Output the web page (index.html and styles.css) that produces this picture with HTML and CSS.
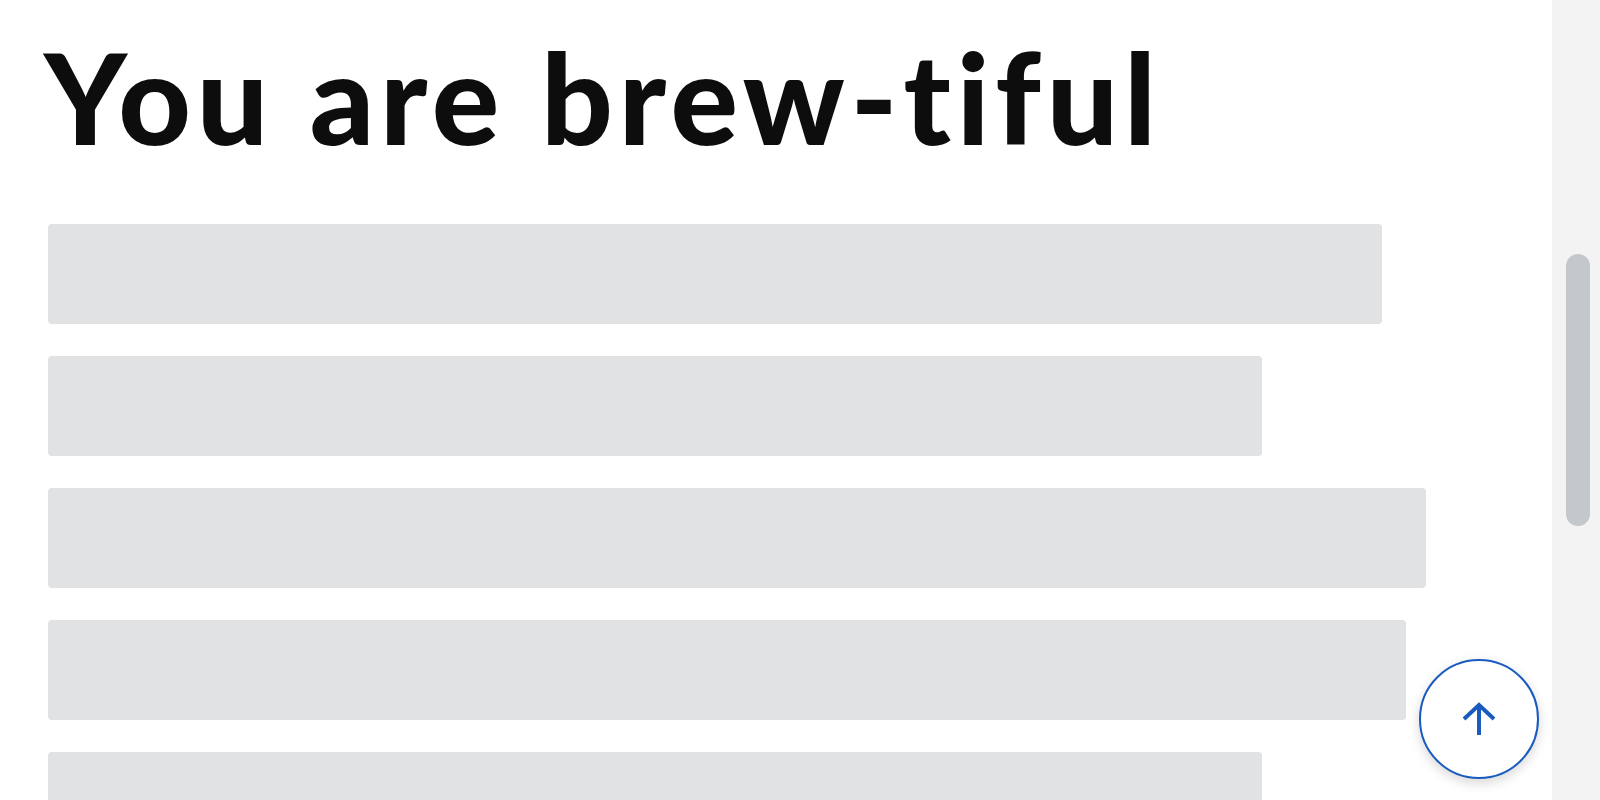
FILE: index.html
```html
<!DOCTYPE html>
<html lang="en">
<head>
<meta charset="utf-8">
<title>You are brew-tiful</title>
<link rel="stylesheet" href="styles.css">
</head>
<body>
<div class="page">
  <main class="content">
    <h1 class="title">You are brew-tiful</h1>
    <div class="list">
      <div class="bar" style="width:1334px"></div>
      <div class="bar" style="width:1214px"></div>
      <div class="bar" style="width:1378px"></div>
      <div class="bar" style="width:1358px"></div>
      <div class="bar" style="width:1214px"></div>
    </div>
    <button class="to-top" aria-label="Back to top">
      <svg width="36" height="36" viewBox="0 0 36 36" fill="none" stroke="#1a5bbf" stroke-width="4">
        <path d="M18 34 V4"/>
        <path d="M3 18 L18 4 L33 18"/>
      </svg>
    </button>
  </main>
  <aside class="rail"><div class="thumb"></div></aside>
</div>
</body>
</html>
```
FILE: styles.css
```css
html, body {
  margin: 0;
  padding: 0;
  height: 100%;
  overflow: hidden;
  background: #ffffff;
}
.page {
  display: flex;
  height: 800px;
}
.content {
  flex: 1;
  position: relative;
  padding: 0 0 0 48px;
  overflow: hidden;
}
.title {
  margin: 21px 0 0 -4px;
  font-family: Lato, sans-serif;
  font-weight: 900;
  font-size: 126px;
  line-height: 1.2;
  color: #0c0d0c;
  letter-spacing: 5.8px;
  font-variant-ligatures: none;
  white-space: nowrap;
}
.list {
  margin-top: 52px;
  display: flex;
  flex-direction: column;
  gap: 32px;
}
.bar {
  height: 100px;
  background: #e1e2e4;
  border-radius: 4px;
  flex: none;
}
.to-top {
  position: absolute;
  right: 13px;
  bottom: 21px;
  width: 120px;
  height: 120px;
  border-radius: 50%;
  border: 2px solid #1a5bbf;
  background: #ffffff;
  box-shadow: 0 4px 12px rgba(0,0,0,0.16);
  display: flex;
  align-items: center;
  justify-content: center;
  padding: 0;
}
.rail {
  width: 48px;
  flex: none;
  background: #f3f3f3;
  padding: 254px 0 0 14px;
  box-sizing: border-box;
}
.thumb {
  width: 24px;
  height: 272px;
  border-radius: 12px;
  background: #c4c7cb;
}
```
